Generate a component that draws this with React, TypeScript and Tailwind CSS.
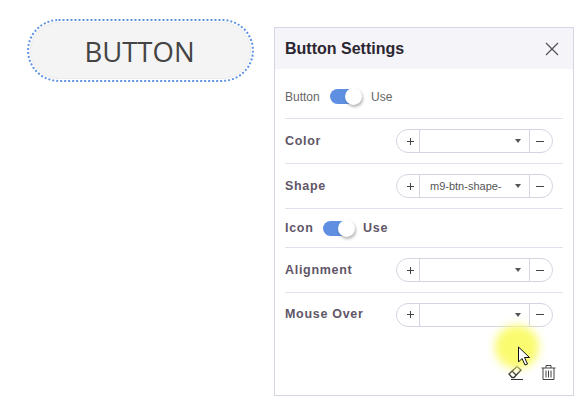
const sans = "font-['Liberation_Sans',Arial,sans-serif]";

function Toggle() {
  return (
    <span className="relative flex h-[15px] w-[30px] items-center rounded-full bg-[#5f8fe0]">
      <span className="absolute right-[-2px] top-[-1px] h-[17px] w-[17px] rounded-full bg-white shadow-[1px_2px_3px_rgba(0,0,0,0.3)]" />
    </span>
  );
}

function Stepper({ value }: { value?: string }) {
  return (
    <div className="flex h-[24px] w-[157px] items-stretch rounded-full border border-[#d3d6e2]">
      <span className="flex w-[22px] items-center justify-center pl-[5px]">
        <svg width="7" height="7" viewBox="0 0 7 7" stroke="#444" strokeWidth="1">
          <path d="M0 3.5H7M3.5 0V7" />
        </svg>
      </span>
      <div className="flex flex-1 items-center justify-between border-x border-[#d3d6e2] pl-[10px] pr-[8px]">
        <span className="text-[11px] text-[#555]">{value}</span>
        <span className="h-0 w-0 border-x-[3px] border-t-[4px] border-x-transparent border-t-[#555]" />
      </div>
      <span className="flex w-[22px] items-center justify-center pr-[3px]">
        <span className="h-px w-[8px] bg-[#444]" />
      </span>
    </div>
  );
}

function Row({ label, value }: { label: string; value?: string }) {
  return (
    <div className="flex h-[45px] items-center justify-between border-b border-[#dfe1ec] pr-[10px]">
      <span className="text-[12.5px] font-bold tracking-[0.7px] text-[#5f5668]">{label}</span>
      <Stepper value={value} />
    </div>
  );
}

export default function App() {
  return (
    <div className={`relative flex h-[412px] w-[584px] items-start overflow-hidden bg-white ${sans}`}>
      <div className="ml-[27px] mt-[19px] h-[63px] w-[227px] rounded-[32px] border-2 border-dotted border-[#5f93e0] p-[1px]">
        <button className="flex h-full w-full items-center justify-center rounded-[29px] border border-[#ebebeb] bg-[#f4f4f4] pr-[2px] pt-[3px] font-['Open_Sans',sans-serif] text-[27.5px] font-normal text-[#444]">
          BUTTON
        </button>
      </div>

      <div className="ml-[20px] mt-[27px] flex h-[369px] w-[300px] flex-col border border-[#d3d7e3]">
        <div className="flex h-[41px] items-center justify-between bg-[#f5f4f9] pl-[10px] pr-[14px]">
          <h1 className="text-[16px] font-bold text-[#2b2630]">Button Settings</h1>
          <svg width="14" height="14" viewBox="0 0 14 14" stroke="#555" strokeWidth="1.3" fill="none">
            <path d="M1 1l12 12M13 1L1 13" />
          </svg>
        </div>
        <div className="flex flex-1 flex-col pl-[10px] pr-[10px]">
          <div className="flex h-[50px] items-center border-b border-[#dfe1ec] pt-[6px] text-[12px] text-[#666]">
            <span className="w-[45px]">Button</span>
            <Toggle />
            <span className="ml-[11px]">Use</span>
          </div>
          <Row label="Color" />
          <Row label="Shape" value="m9-btn-shape-" />
          <div className="flex h-[39px] items-center border-b border-[#dfe1ec] text-[12.5px] font-bold tracking-[0.7px] text-[#5f5668]">
            <span className="w-[38px]">Icon</span>
            <Toggle />
            <span className="ml-[10px]">Use</span>
          </div>
          <Row label="Alignment" />
          <div className="flex h-[45px] items-center justify-between pb-[2px] pr-[10px]">
            <span className="text-[12.5px] font-bold tracking-[0.7px] text-[#5f5668]">Mouse Over</span>
            <Stepper />
          </div>
          <div className="mt-auto flex justify-end gap-[17px] pb-[15px] pr-[7px]">
            <svg width="16" height="15" viewBox="0 0 16 15" fill="white" stroke="#333" strokeWidth="1.3">
              <path d="M1 9L9 1.5L13 5L6 12.5H4Z" />
              <path d="M4 6L8 10" />
              <path d="M3 14.5H15" strokeWidth="1" />
            </svg>
            <svg width="15" height="15" viewBox="0 0 15 15" fill="none" stroke="#444" strokeWidth="1">
              <path d="M0.5 3H14.5M5 3V0.5H10V3M2 3V14.5H13V3M5 5.5V12.5M7.5 5.5V12.5M10 5.5V12.5" />
            </svg>
          </div>
        </div>
      </div>

      {/* recording highlight + pointer */}
      <div className="absolute left-[495px] top-[325px] h-[44px] w-[44px] rounded-full bg-[#fbfb70] blur-[4px]" />
      <svg className="absolute left-[517px] top-[346px]" width="14" height="21" viewBox="0 0 14 21" fill="white" stroke="#111" strokeWidth="1">
        <path d="M1.5 1V16L5 12.5L8 19L10.5 18L7.5 11.5H12.5Z" />
      </svg>
    </div>
  );
}
